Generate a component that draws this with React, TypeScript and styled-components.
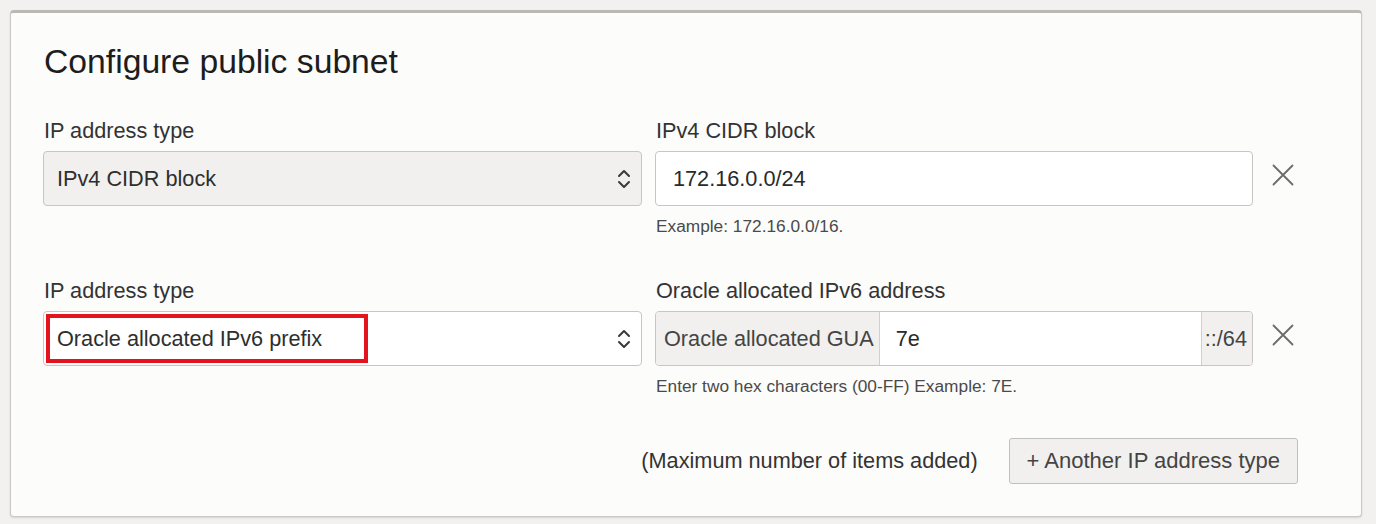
import React from 'react';
import styled, { createGlobalStyle } from 'styled-components';

const GlobalStyle = createGlobalStyle`
  html, body {
    margin: 0;
    padding: 0;
    background: #f2f1ef;
    font-family: 'Liberation Sans', Arial, sans-serif;
  }
`;

type IpRow = {
  typeLabel: string;
  typeValue: string;
  disabled?: boolean;
  highlighted?: boolean;
  fieldLabel: string;
  help: string;
};

const rows: IpRow[] = [
  {
    typeLabel: 'IP address type',
    typeValue: 'IPv4 CIDR block',
    disabled: true,
    fieldLabel: 'IPv4 CIDR block',
    help: 'Example: 172.16.0.0/16.',
  },
  {
    typeLabel: 'IP address type',
    typeValue: 'Oracle allocated IPv6 prefix',
    highlighted: true,
    fieldLabel: 'Oracle allocated IPv6 address',
    help: 'Enter two hex characters (00-FF) Example: 7E.',
  },
];

function UpDownIcon() {
  return (
    <svg width="14" height="26" viewBox="0 0 14 26" fill="none">
      <path d="M2 10 L7 5 L12 10" stroke="#3a3a3a" strokeWidth="2" strokeLinecap="round" strokeLinejoin="round" />
      <path d="M2 16 L7 21 L12 16" stroke="#3a3a3a" strokeWidth="2" strokeLinecap="round" strokeLinejoin="round" />
    </svg>
  );
}

function CloseIcon() {
  return (
    <svg width="22" height="22" viewBox="0 0 22 22" fill="none">
      <path d="M1.5 1.5 L20.5 20.5 M20.5 1.5 L1.5 20.5" stroke="#6b6b6b" strokeWidth="1.8" strokeLinecap="round" />
    </svg>
  );
}

export default function App() {
  return (
    <>
      <GlobalStyle />
      <Page>
        <Card>
          <Title>Configure public subnet</Title>
          <Rows>
            {rows.map((row, index) => (
              <FieldRow key={index}>
                <LeftField>
                  <Label>{row.typeLabel}</Label>
                  <Select disabled={row.disabled}>
                    <SelectText>{row.typeValue}</SelectText>
                    <UpDownIcon />
                    {row.highlighted && <Highlight />}
                  </Select>
                </LeftField>
                <RightField>
                  <Label>{row.fieldLabel}</Label>
                  {index === 0 ? (
                    <TextInput>172.16.0.0/24</TextInput>
                  ) : (
                    <InputGroup>
                      <Addon>Oracle allocated GUA</Addon>
                      <GroupInput>7e</GroupInput>
                      <Addon $suffix>::/64</Addon>
                    </InputGroup>
                  )}
                  <Help>{row.help}</Help>
                </RightField>
                <RemoveButton>
                  <CloseIcon />
                </RemoveButton>
              </FieldRow>
            ))}
          </Rows>
          <Footer>
            <MaxNote>(Maximum number of items added)</MaxNote>
            <AddButton>+ Another IP address type</AddButton>
          </Footer>
        </Card>
      </Page>
    </>
  );
}

const Page = styled.div`
  padding: 10px 14px 7px 10px;
`;

const Card = styled.div`
  box-sizing: border-box;
  height: 507px;
  background: #fcfcfb;
  border: 1px solid #cbc8c3;
  border-top: 3px solid #bcb9b4;
  border-radius: 4px;
  box-shadow: 0 1px 2px rgba(0, 0, 0, 0.12);
  padding: 28px 63px 0 32px;
`;

const Title = styled.h2`
  margin: 0 0 38px 1px;
  font-size: 33.7px;
  line-height: 40px;
  font-weight: 400;
  color: #1d1d1d;
`;

const Rows = styled.div`
  display: flex;
  flex-direction: column;
  gap: 43px;
`;

const FieldRow = styled.div`
  display: flex;
  align-items: flex-start;
`;

const LeftField = styled.div`
  width: 599px;
  margin-right: 13px;
  display: flex;
  flex-direction: column;
`;

const RightField = styled.div`
  flex: 1;
  display: flex;
  flex-direction: column;
`;

const Label = styled.div`
  font-size: 21.7px;
  line-height: 24px;
  color: #333;
  margin: 0 0 8px 1px;
`;

const Select = styled.div<{ disabled?: boolean }>`
  position: relative;
  box-sizing: border-box;
  height: 55px;
  display: flex;
  align-items: center;
  justify-content: space-between;
  padding: 0 10px 0 13px;
  border: 1px solid #c9c6c1;
  border-radius: 4px;
  background: ${({ disabled }) => (disabled ? '#f1f0ee' : '#ffffff')};
`;

const SelectText = styled.span`
  font-size: 21.7px;
  color: #2e2e2e;
  position: relative;
  z-index: 1;
`;

const Highlight = styled.div`
  position: absolute;
  left: 2px;
  top: 2px;
  width: 322px;
  height: 49px;
  box-sizing: border-box;
  border: 4px solid #e3141e;
`;

const TextInput = styled.div`
  box-sizing: border-box;
  height: 55px;
  display: flex;
  align-items: center;
  padding: 0 17px;
  border: 1px solid #c9c6c1;
  border-radius: 4px;
  background: #fff;
  font-size: 21.7px;
  color: #2a2a2a;
`;

const InputGroup = styled.div`
  box-sizing: border-box;
  height: 55px;
  display: flex;
  border: 1px solid #c9c6c1;
  border-radius: 4px;
  overflow: hidden;
  background: #fff;
`;

const Addon = styled.div<{ $suffix?: boolean }>`
  display: flex;
  align-items: center;
  padding: ${({ $suffix }) => ($suffix ? '0 5px 0 3px' : '0 5px 0 8px')};
  background: #f1f0ee;
  color: #444;
  font-size: 21.7px;
  ${({ $suffix }) => ($suffix ? 'border-left: 1px solid #d3d0cb;' : 'border-right: 1px solid #d3d0cb;')}
`;

const GroupInput = styled.div`
  flex: 1;
  display: flex;
  align-items: center;
  padding: 0 16px;
  font-size: 21.7px;
  color: #2a2a2a;
`;

const Help = styled.div`
  margin: 10px 0 0 1px;
  font-size: 17.3px;
  line-height: 20px;
  color: #4a4a4a;
`;

const RemoveButton = styled.div`
  width: 45px;
  height: 55px;
  margin-top: 28px;
  display: flex;
  align-items: center;
  justify-content: flex-end;
  padding-right: 4px;
  box-sizing: border-box;
`;

const Footer = styled.div`
  display: flex;
  justify-content: flex-end;
  align-items: center;
  gap: 31px;
  margin-top: 42px;
`;

const MaxNote = styled.span`
  font-size: 21.7px;
  color: #333;
`;

const AddButton = styled.button`
  box-sizing: border-box;
  height: 46px;
  padding: 0 17px;
  font-family: 'Liberation Sans', Arial, sans-serif;
  font-size: 22px;
  color: #444;
  background: #f1f0ee;
  border: 1px solid #c3c0bb;
  border-radius: 3px;
`;
